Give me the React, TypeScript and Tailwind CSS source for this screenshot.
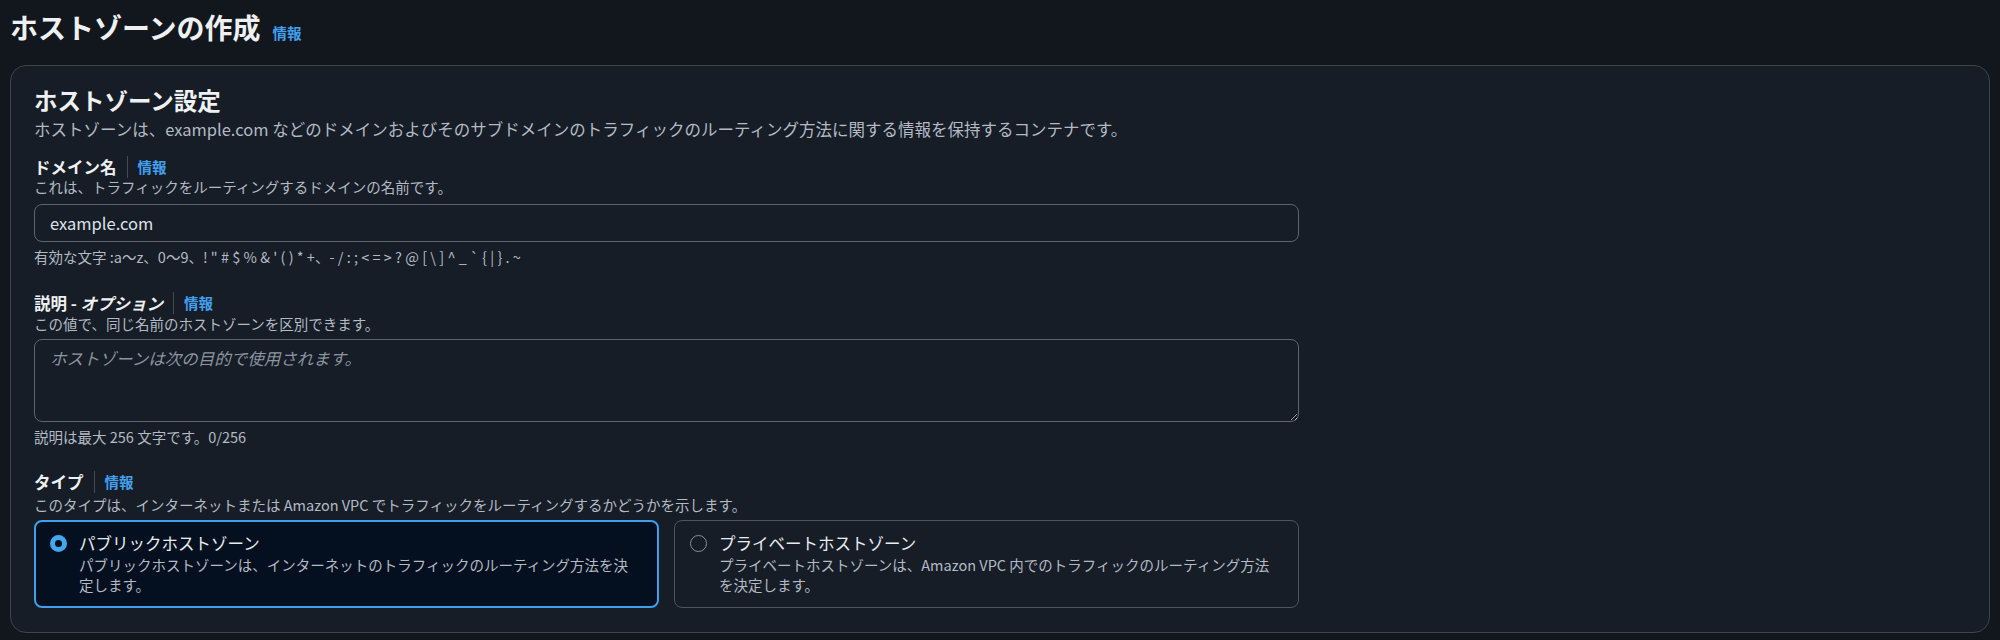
import { useState } from "react";

function InfoLink({ divider = true }: { divider?: boolean }) {
  return (
    <span
      className={
        divider
          ? "ml-[10px] border-l border-[#414a56] pl-[10px] text-[14.5px] font-bold text-[#42a0ee]"
          : "ml-[12px] text-[14.5px] font-bold leading-none text-[#42a0ee]"
      }
    >
      情報
    </span>
  );
}

function Label({ children }: { children: React.ReactNode }) {
  return (
    <div className="flex items-center text-[16.5px] font-bold leading-[22px] text-[#eef0f2]">
      <span>{children}</span>
      <InfoLink />
    </div>
  );
}

function Hint({ children, className = "" }: { children: React.ReactNode; className?: string }) {
  return <p className={"text-[14.5px] leading-[18px] text-[#b3bac4] " + className}>{children}</p>;
}

interface RadioCardProps {
  title: string;
  desc: string;
  selected: boolean;
  onSelect: () => void;
}

function RadioCard({ title, desc, selected, onSelect }: RadioCardProps) {
  return (
    <button
      type="button"
      onClick={onSelect}
      className={
        selected
          ? "flex items-start gap-[12px] rounded-[8px] border-2 border-[#3e9fea] bg-[#04101f] pl-[14px] pr-[20px] pt-[10px] pb-[11px] text-left"
          : "flex items-start gap-[12px] rounded-[8px] border border-[#4d5560] bg-[#161d26] pl-[15px] pr-[21px] pt-[11px] pb-[12px] text-left"
      }
    >
      <span
        className={
          selected
            ? "mt-[2.5px] h-[17px] w-[17px] shrink-0 rounded-full border-[5px] border-[#42a6f0] bg-[#0a0f18]"
            : "mt-[2.5px] h-[17px] w-[17px] shrink-0 rounded-full border-[1.5px] border-[#8a9098] bg-transparent"
        }
      />
      <span className="flex flex-col">
        <span className="text-[16.5px] leading-[22px] text-[#e9ecef]">{title}</span>
        <span className="mt-[1px] text-[14.5px] leading-[20px] text-[#b3bac4]">{desc}</span>
      </span>
    </button>
  );
}

export default function App() {
  const [domain, setDomain] = useState("example.com");
  const [desc, setDesc] = useState("");
  const [zoneType, setZoneType] = useState<"public" | "private">("public");

  return (
    <div className="min-h-[640px] bg-[#12171e] px-[10px] pt-[9px] font-['Noto_Sans_CJK_JP',sans-serif] text-[#eef0f2]">
      <h1 className="h-[36px] text-[28px] font-bold leading-[36px]">
        ホストゾーンの作成
        <InfoLink divider={false} />
      </h1>

      <section className="mt-[20px] rounded-[16px] border border-[#3d444e] bg-[#161d26] pl-[23px] pr-[24px] pt-[19px] pb-[24px]">
        <h2 className="text-[23.5px] font-bold leading-[30px]">ホストゾーン設定</h2>
        <p className="mt-[3px] text-[16.5px] leading-[22px] text-[#b3bac4]">
          ホストゾーンは、example.com などのドメインおよびそのサブドメインのトラフィックのルーティング方法に関する情報を保持するコンテナです。
        </p>

        <div className="w-[1265px]">
          <div className="mt-[16px]">
            <Label>ドメイン名</Label>
            <Hint>これは、トラフィックをルーティングするドメインの名前です。</Hint>
            <input
              type="text"
              value={domain}
              onChange={(e) => setDomain(e.target.value)}
              className="mt-[8px] h-[38px] w-full rounded-[8px] border border-[#5b6470] bg-[#161d26] px-[15px] text-[16.5px] text-[#dfe3e8] focus:outline-none"
            />
            <Hint className="mt-[6px]">
              有効な文字 :a〜z、0〜9、! " # $ % &amp; ' ( ) * +、- / : ; &lt; = &gt; ? @ [ \ ] ^ _ ` {"{"} | {"}"} . ~
            </Hint>
          </div>

          <div className="mt-[26px]">
            <div className="flex items-center text-[16.5px] font-bold leading-[22px] text-[#eef0f2]">
              <span>
                説明 - <i>オプション</i>
              </span>
              <InfoLink />
            </div>
            <Hint className="mt-[1px]">この値で、同じ名前のホストゾーンを区別できます。</Hint>
            <textarea
              value={desc}
              onChange={(e) => setDesc(e.target.value.slice(0, 256))}
              placeholder="ホストゾーンは次の目的で使用されます。"
              className="mt-[6px] block h-[83px] w-full rounded-[8px] border border-[#5b6470] bg-[#161d26] px-[15px] py-[7px] text-[16.5px] leading-[22px] text-[#dfe3e8] [color-scheme:dark] placeholder:italic placeholder:text-[#8c95a1] focus:outline-none"
            />
            <Hint className="mt-[6px]">説明は最大 256 文字です。{desc.length}/256</Hint>
          </div>

          <div className="mt-[25px]">
            <Label>タイプ</Label>
            <Hint className="mt-[3px]">
              このタイプは、インターネットまたは Amazon VPC でトラフィックをルーティングするかどうかを示します。
            </Hint>
            <div className="mt-[6px] grid grid-cols-2 gap-[15px]">
              <RadioCard
                title="パブリックホストゾーン"
                desc="パブリックホストゾーンは、インターネットのトラフィックのルーティング方法を決定します。"
                selected={zoneType === "public"}
                onSelect={() => setZoneType("public")}
              />
              <RadioCard
                title="プライベートホストゾーン"
                desc="プライベートホストゾーンは、Amazon VPC 内でのトラフィックのルーティング方法を決定します。"
                selected={zoneType === "private"}
                onSelect={() => setZoneType("private")}
              />
            </div>
          </div>
        </div>
      </section>
    </div>
  );
}
